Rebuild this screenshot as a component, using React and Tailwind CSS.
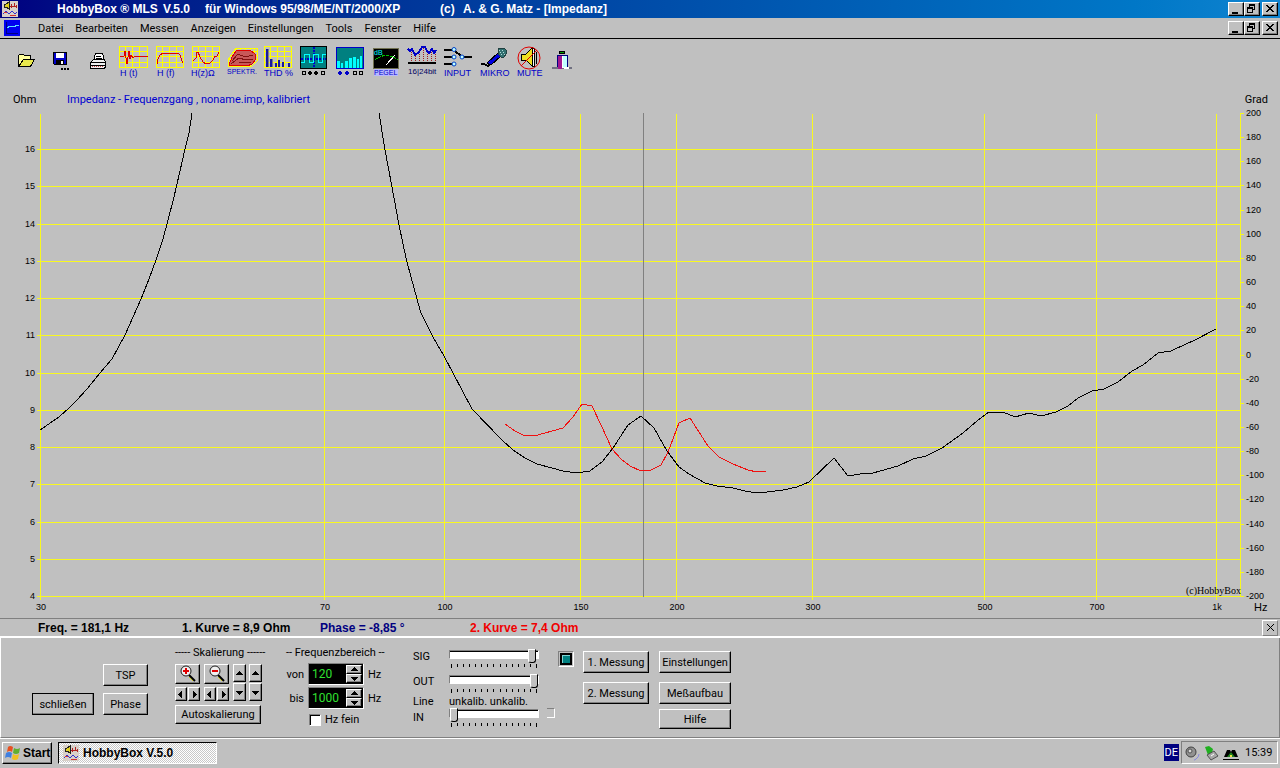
import React, { useState } from 'react';

const RAISED = 'border border-t-white border-l-white border-r-black border-b-black bg-[#c0c0c0] shadow-[inset_-1px_-1px_0_#808080]';

const MENU = ['Datei', 'Bearbeiten', 'Messen', 'Anzeigen', 'Einstellungen', 'Tools', 'Fenster', 'Hilfe'];

const FREQS = [
  { f: 30, label: '30' },
  { f: 70, label: '70' },
  { f: 100, label: '100' },
  { f: 150, label: '150' },
  { f: 200, label: '200' },
  { f: 300, label: '300' },
  { f: 500, label: '500' },
  { f: 700, label: '700' },
  { f: 1000, label: '1k' },
];
const OHMS = [4, 5, 6, 7, 8, 9, 10, 11, 12, 13, 14, 15, 16];
const DEGREES = Array.from({ length: 21 }, (_, i) => 200 - i * 20);

const xOf = (f) => Math.round(40 + (Math.log(f / 30) / Math.log(1000 / 30)) * 1176);
const yOfOhm = (o) => Math.round(596 - (o - 4) * 37.25);
const yOfDeg = (d) => Math.round(354.5 - d * 1.2075);

const CURVE_LOW = '40,430 59,417 69,408 77,400 87,389 100,373 112,359 125,335 141,299 149,279 156,260 163,239 167,224 174,197 177,184 185,149 189,133 192,113';
const CURVE_1 = '379,113 385,150 392,187 399,225 406,258 411,277 417,299 421,313 433,337 444,356 472,409 502,440 513,450 525,458 537,464 552,468 563,471 577,473 590,471 602,462 613,448 628,425 641,416 654,428 667,451 679,467 689,474 705,483 717,486 733,488 745,491 757,493 767,492 783,490 797,487 809,482 834,458 848,476 860,474 873,473 898,466 913,459 926,456 942,448 963,433 977,421 989,412 1003,412 1015,417 1029,413 1041,416 1056,412 1068,406 1078,398 1092,391 1104,389 1118,382 1132,371 1143,365 1158,353 1171,351 1186,344 1195,340 1216,329';
const CURVE_2 = '505,424 515,431 523,435 534,436 563,428 573,417 582,404 592,406 602,427 612,449 621,459 630,466 641,471 651,470 661,465 668,452 679,423 690,418 708,446 719,457 733,464 748,470 757,472 766,471';

const Caption = ({ size = 9, x = 2, y = 32, children, ...rest }) => (
  <text x={x} y={y} fontSize={size} fill="#0000c8" fontFamily="Liberation Sans, sans-serif" {...rest}>{children}</text>
);

const MiniGrid = ({ x, w = 28 }) => (
  <g stroke="#ffff00" fill="none">
    <rect x={x + 0.5} y="2.5" width={w} height="21" />
    <path d={`M${x + 6.5} 2v22M${x + 13.5} 2v22M${x + 20.5} 2v22M${x} 7.5h${w}M${x} 12.5h${w}M${x} 18.5h${w}`} />
  </g>
);

const TOOLS = [
  {
    name: 'Öffnen',
    art: (
      <>
        <path d="M10.5 22.5v-11l1-1h4l1 1h6v4h4l-4 7z" fill="#ffff9c" stroke="#000" />
        <path d="M10.5 22.5l5-7h11l-4 7z" fill="#e8e84c" stroke="#000" />
      </>
    ),
  },
  {
    name: 'Speichern',
    art: (
      <>
        <path d="M9.5 8.5h13v12h-12l-1-1z" fill="#0000c8" stroke="#000" />
        <path d="M12 9h8v5h-8z" fill="#fff" />
        <path d="M12 16h8v5h-8z" fill="#000" />
        <path d="M17 17h2v3h-2z" fill="#fff" />
        <path d="M17 24h2v2h-2zM20 24h2v2h-2zM23 24h2v2h-2z" fill="#000" />
      </>
    ),
  },
  {
    name: 'Drucken',
    art: (
      <>
        <path d="M13.5 16.5l2-7h7l2 7z" fill="#fff" stroke="#000" />
        <path d="M16 12.5h5M16 14.5h6" stroke="#000" />
        <path d="M10.5 18.5l3-3h10l2 2v5l-1 2h-14z" fill="#f0f0f0" stroke="#000" />
        <path d="M10 18.5h15M11 21.5h14" stroke="#000" />
        <path d="M12 22.5h12" stroke="#c04040" strokeDasharray="1 1" />
      </>
    ),
  },
  {
    name: 'Impulsantwort',
    art: (
      <>
        <MiniGrid x={3} />
        <path d="M4 12h4l1-5 2 13 2-13 1 8 1-4 2 3 2-2h13" fill="none" stroke="#e00000" />
        <Caption x={4}>H (t)</Caption>
      </>
    ),
  },
  {
    name: 'Frequenzgang',
    art: (
      <>
        <MiniGrid x={4} w={27} />
        <path d="M5 20l1-5 2-4 3-2h15l2 2 2 6v2" fill="none" stroke="#e00000" />
        <Caption x={5}>H (f)</Caption>
      </>
    ),
  },
  {
    name: 'Impedanz',
    art: (
      <>
        <MiniGrid x={4} w={27} />
        <path d="M5 17l3-3 1-6h1l2 5 3 5 3 2 4-1 3-3 2-4h2l2-4" fill="none" stroke="#e00000" />
        <Caption x={3}>H(z)Ω</Caption>
      </>
    ),
  },
  {
    name: 'Spektrum',
    art: (
      <>
        <path d="M4 22V16l8-12h21v13l-6 6z" fill="none" stroke="#ffff00" />
        <path d="M10 7h23M7 11h26M5 15h28M12 4v18M16 4v18M21 4v18M26 4v18M30 4v16" stroke="#ffff00" />
        <path d="M5 21l3-8 4-6 4-1 4 1 6-1 5 4 1 5-4 5-5 2z" fill="#c85858" stroke="#e00000" />
        <path d="M8 17l6-7 7 3 8-2M7 20l8-6 7 2 7-1M15 19l6-1 6 1" fill="none" stroke="#801010" />
        <Caption x={3} y={30} size={7}>SPEKTR.</Caption>
      </>
    ),
  },
  {
    name: 'Klirrfaktor',
    art: (
      <>
        <MiniGrid x={4} w={27} />
        <path d="M6 5h2v18H6zM10 15h2v8h-2zM15 19h2v4h-2zM18 16h2v7h-2zM22 18h2v5h-2zM28 19h2v4h-2z" fill="#1818a0" />
        <path d="M8 5h1v18H8zM12 15h1v8h-1z" fill="#808080" />
        <Caption x={4}>THD %</Caption>
      </>
    ),
  },
  {
    name: 'Oszilloskop',
    art: (
      <>
        <rect x="4.5" y="2.5" width="26" height="22" fill="#008080" stroke="#000" />
        <path d="M17.5 3v21M5 14.500h25" stroke="#0000c8" strokeWidth="2" strokeDasharray="2 1" />
        <path d="M5 18.5h3v-8h5v8h4v-8h5v8h4v-8h4" fill="none" stroke="#00ffff" />
        <path d="M6 27h4v4H6zM25 27h4v4h-4z" fill="#000" />
        <path d="M7 28h2v2H7zM26 28h2v2h-2z" fill="#c0c0c0" />
        <path d="M13 27h2v1h1v2h-1v1h-2v-1h-1v-2h1zM19 27h2v1h1v2h-1v1h-2v-1h-1v-2h1z" />
      </>
    ),
  },
  {
    name: 'Analysator',
    art: (
      <>
        <rect x="4.500" y="3.500" width="27" height="21" fill="#008080" stroke="#0000c8" />
        <path d="M5 17h3v7H5zM9 19h2v5H9zM13 17h3v7h-3zM17 14h3v10h-3zM21 13h3v11h-3zM25 15h2v9h-2zM28 12h2v12h-2z" fill="#00ffff" />
        <path d="M7 27h2v1h1v2H9v1H7v-1H6v-2h1zM14 27h2v1h1v2h-1v1h-2v-1h-1v-2h1z" fill="#0000c8" />
        <path d="M21.500 27.500h3v3h-3zM27.500 27.500h3v3h-3z" fill="none" stroke="#000" />
      </>
    ),
  },
  {
    name: 'Pegel',
    art: (
      <>
        <rect x="5.500" y="4.500" width="25" height="20" fill="#000" stroke="#707050" />
        <path d="M7 16q11-9 23 0" fill="none" stroke="#00c000" strokeDasharray="3 1" />
        <path d="M18 21l9-10" stroke="#fff" />
        <text x="6" y="11" fontSize="7" fill="#00ffff" fontFamily="Liberation Sans, sans-serif">dB</text>
        <rect x="6" y="25" width="24" height="7" fill="#b8b8ff" />
        <Caption x={6} y={31} size={7}>PEGEL</Caption>
      </>
    ),
  },
  {
    name: 'Auflösung',
    art: (
      <>
        <path d="M7.500 8v10M11.500 10v8M15.500 8v10M19.500 4v14M23.500 6v12M27.500 8v10M31.500 6v12" stroke="#a02020" strokeDasharray="1 1" />
        <path d="M4 5l2 2 2-2 3 6 4-3 3-5h3l2 4 2 2 3-4 2 4 2-3" fill="none" stroke="#0000c8" strokeWidth="2" />
        <path d="M4 18h28v2H4z" />
        <Caption x={4} y={30} size={8} fill="#000060">16|24bit</Caption>
      </>
    ),
  },
  {
    name: 'Eingang',
    art: (
      <>
        <path d="M4 6h9M4 13h9M4 20h9M15 7l6 5M22 13h10" stroke="#000" strokeWidth="2" />
        <g fill="#c0ffff" stroke="#0040c8" shapeRendering="auto">
          <circle cx="14" cy="5.500" r="2" />
          <circle cx="14" cy="13" r="2" />
          <circle cx="14" cy="20" r="2" />
          <circle cx="22" cy="13" r="2" />
        </g>
        <Caption x={4}>INPUT</Caption>
      </>
    ),
  },
  {
    name: 'Mikrofon',
    art: (
      <g>
        <path d="M5 20h3l4 2 4-3" fill="none" stroke="#000" strokeWidth="2" />
        <path d="M11 19l11-10 3 3-10 9z" fill="#0000e0" stroke="#000" />
        <path d="M22 5l2-1h4l2 2v4l-2 3h-3l-3-3z" fill="#307070" stroke="#204040" />
        <path d="M23 6h1M26 6h1M24 8h1M27 8h1M25 10h1M28 10h1" stroke="#b0d8d8" />
        <Caption x={4}>MIKRO</Caption>
      </g>
    ),
  },
  {
    name: 'Stumm',
    art: (
      <>
        <path d="M9 10h5l6-6v18l-6-6H9z" fill="#f0e020" stroke="#000" />
        <path d="M20 4h2v18h-2z" fill="#f8f8f8" stroke="#000" />
        <path d="M24 8v12" stroke="#000" />
        <circle cx="17" cy="14" r="11" fill="none" stroke="#e00000" shapeRendering="auto" />
        <path d="M25 6L9 22" stroke="#e00000" shapeRendering="auto" />
        <Caption x={5}>MUTE</Caption>
      </>
    ),
  },
  {
    name: 'Beenden',
    art: (
      <>
        <path d="M4 23h20v2H4z" fill="#707080" />
        <path d="M9 11h11v12H9z" fill="#000080" />
        <path d="M10 12h4v13h-4z" fill="#a01890" />
        <path d="M14 12h5v12h-5z" fill="#c0ffff" />
        <path d="M14 12h1v12h-1z" fill="#fff" />
        <path d="M15 23h6v2h-5z" fill="#fff" />
        <path d="M11.500 7.500h5v2h-5z" fill="#00a000" stroke="#000" />
      </>
    ),
  },
];

const AppIcon = () => (
  <svg width="16" height="16" viewBox="0 0 16 16" shapeRendering="crispEdges" aria-hidden="true">
    <rect width="16" height="16" fill="#d8d0c8" />
    <path d="M2 3h2l3-2v7L4 6H2z" fill="#e0d020" stroke="#202020" />
    <path d="M9 3h1v4H9zM12 2h1v4h-1zM14 4h1v3h-1zM8 5h7v1H8z" fill="#b02020" />
    <path d="M1 13l3-3 3 3 3-3 3 3 2-2" fill="none" stroke="#3030d0" />
    <path d="M2 11h3M8 14h6" stroke="#d03030" />
  </svg>
);

const WindowButtons = () => (
  <div className="flex">
    <button aria-label="Minimieren" className={`h-[14px] w-4 ${RAISED}`}>
      <svg viewBox="0 0 14 12" className="block h-3 w-[14px]" shapeRendering="crispEdges"><path d="M3 9h6v2H3z" /></svg>
    </button>
    <button aria-label="Wiederherstellen" className={`h-[14px] w-4 ${RAISED}`}>
      <svg viewBox="0 0 14 12" className="block h-3 w-[14px]" shapeRendering="crispEdges">
        <path d="M4 1h6v6H8V6h1V3H5v1H4zM2 4h6v6H2zM3 6v3h4V6z" fillRule="evenodd" />
      </svg>
    </button>
    <button aria-label="Schließen" className={`ml-0.5 h-[14px] w-4 ${RAISED}`}>
      <svg viewBox="0 0 14 12" className="block h-3 w-[14px]" shapeRendering="crispEdges">
        <path d="M3 2h2v1h1v1h2V3h1V2h2v1h-1v1H9v1H8v1h1v1h1v1h1v1H9V8H8V7H6v1H5v1H3V8h1V7h1V6h1V5H5V4H4V3H3z" />
      </svg>
    </button>
  </div>
);

const Button = ({ className = '', children, ...rest }) => (
  <button className={`flex items-center justify-center whitespace-nowrap ${RAISED} ${className}`} {...rest}>{children}</button>
);

const ARROWS = {
  left: 'M5 1v7h-1V7H3V6H2V5H1V4h1V3h1V2h1V1z',
  right: 'M3 1v7h1V7h1V6h1V5h1V4H6V3H5V2H4V1z',
  up: 'M1 6h7V5H7V4H6V3H5V2H4v1H3v1H2v1H1z',
  down: 'M1 3h7v1H7v1H6v1H5v1H4V6H3V5H2V4H1z',
};

const ArrowButton = ({ dir, label, className }) => (
  <Button aria-label={label} className={className}>
    <svg width="9" height="9" viewBox="0 0 9 9" shapeRendering="crispEdges" className="shrink-0"><path d={ARROWS[dir]} /></svg>
  </Button>
);

const Magnifier = ({ plus }) => (
  <svg width="18" height="18" viewBox="0 0 18 18">
    <path d="M10 10l6 6" stroke="#000" strokeWidth="2" />
    <path d="M10 12l4 4" stroke="#c8c820" />
    <circle cx="7" cy="6" r="5" fill="#f0f0f0" stroke="#202020" />
    <path d={plus ? 'M4 6h6M7 3v6' : 'M4 6h6'} stroke="#e00000" strokeWidth="2" />
  </svg>
);

const FreqField = ({ id, label, value, onChange }) => {
  const step = (n) => onChange(String(Number(value) + n));
  return (
    <div className="flex items-center">
      <label htmlFor={id} className="w-[22px] pr-1 text-right">{label}</label>
      <div className="flex h-[22px] w-14 border border-t-[#808080] border-l-[#808080] border-r-white border-b-white bg-black p-px">
        <input
          id={id}
          value={value}
          onChange={e => onChange(e.target.value)}
          className="w-9 min-w-0 bg-black pl-0.5 text-xs text-[#30e030] outline-none"
        />
        <div className="flex w-4 flex-col">
          <button aria-label={`${label} erhöhen`} onClick={() => step(1)} className={`flex h-[9px] w-4 items-center justify-center ${RAISED}`}>
            <svg width="9" height="7" viewBox="0 1 9 7" shapeRendering="crispEdges" className="shrink-0"><path d={ARROWS.up} /></svg>
          </button>
          <button aria-label={`${label} verringern`} onClick={() => step(-1)} className={`flex h-[9px] w-4 items-center justify-center ${RAISED}`}>
            <svg width="9" height="7" viewBox="0 1 9 7" shapeRendering="crispEdges" className="shrink-0"><path d={ARROWS.down} /></svg>
          </button>
        </div>
      </div>
      <span className="pl-1">Hz</span>
    </div>
  );
};

const Slider = ({ label, start }) => (
  <div className="w-[90px]">
    <input
      type="range"
      aria-label={label}
      defaultValue={start}
      className="block h-[14px] w-full appearance-none bg-transparent [&::-webkit-slider-runnable-track]:h-[9px] [&::-webkit-slider-runnable-track]:border [&::-webkit-slider-runnable-track]:border-[#808080] [&::-webkit-slider-runnable-track]:border-r-white [&::-webkit-slider-runnable-track]:border-b-white [&::-webkit-slider-runnable-track]:bg-white [&::-webkit-slider-runnable-track]:shadow-[inset_0_1px_0_#000] [&::-webkit-slider-thumb]:-mt-0.5 [&::-webkit-slider-thumb]:h-[14px] [&::-webkit-slider-thumb]:w-2 [&::-webkit-slider-thumb]:appearance-none [&::-webkit-slider-thumb]:rounded-b-[3px] [&::-webkit-slider-thumb]:border [&::-webkit-slider-thumb]:border-t-white [&::-webkit-slider-thumb]:border-l-white [&::-webkit-slider-thumb]:border-r-black [&::-webkit-slider-thumb]:border-b-black [&::-webkit-slider-thumb]:bg-[#c0c0c0]"
    />
    <div className="mt-[3px] flex justify-between px-0.5">
      {Array.from({ length: 15 }, (_, i) => (
        <span key={i} className={`w-px bg-black ${i === 0 || i === 14 ? 'h-1' : 'h-[3px]'}`} />
      ))}
    </div>
  </div>
);

const ImpedanceChart = () => (
  <svg viewBox="0 108 1280 510" className="block w-full" fontFamily="Liberation Sans, sans-serif" fontSize="9" role="img" aria-label="Impedanz - Frequenzgang">
    <g stroke="#f8f820" shapeRendering="crispEdges">
      {OHMS.map(o => <line key={o} x1="37" x2="1241" y1={yOfOhm(o) + 0.5} y2={yOfOhm(o) + 0.5} />)}
      {FREQS.map(({ f }) => <line key={f} x1={xOf(f) + 0.5} x2={xOf(f) + 0.5} y1="114" y2="600" />)}
      <line x1="1240.5" x2="1240.5" y1="113" y2="597" />
      {DEGREES.map(d => <line key={d} x1="1240" x2="1244" y1={yOfDeg(d) + 0.5} y2={yOfDeg(d) + 0.5} />)}
    </g>

    {/* cursor */}
    <line x1="643.5" x2="643.5" y1="113" y2="597" stroke="#808080" shapeRendering="crispEdges" />

    <g fill="none" shapeRendering="crispEdges">
      <polyline points={CURVE_LOW} stroke="#000" />
      <polyline points={CURVE_1} stroke="#000" />
      <polyline points={CURVE_2} stroke="#f01010" />
    </g>

    <g textAnchor="end">
      {OHMS.map(o => <text key={o} x="35" y={yOfOhm(o) + 3}>{o}</text>)}
    </g>
    <g textAnchor="middle">
      {FREQS.map(({ f, label }) => <text key={f} x={xOf(f) + 1} y="610">{label}</text>)}
    </g>
    {DEGREES.map(d => <text key={d} x="1246" y={yOfDeg(d) + 3}>{d}</text>)}
    <text x="1254" y="611" fontSize="11">Hz</text>
    <text x="1186" y="594" fontSize="10" fontFamily="Liberation Serif, serif">(c)HobbyBox</text>
  </svg>
);

const ControlPanel = () => {
  const [from, setFrom] = useState('120');
  const [to, setTo] = useState('1000');

  return (
    <div className="flex items-start border-l border-r border-l-white border-r-[#808080] border-b border-b-[#808080] pt-[7px] pb-2 pl-[31px]">
      <div className="mt-[19px] flex items-end gap-[9px]">
        <Button className="h-[22px] w-[62px] outline outline-black -outline-offset-1">schließen</Button>
        <div className="flex flex-col gap-[7px]">
          <Button className="h-[22px] w-[45px]">TSP</Button>
          <Button className="h-[22px] w-[45px]">Phase</Button>
        </div>
      </div>

      {/* Skalierung */}
      <div className="ml-[27px] w-[88px]">
        <div className="mb-[3px] h-4 leading-4 whitespace-nowrap">----- Skalierung ------</div>
        <div className="flex gap-[3px]">
          {[true, false].map(plus => (
            <div key={String(plus)} className="mr-px flex w-[25px] flex-col gap-[3px]">
              <Button aria-label={plus ? 'Vergrößern' : 'Verkleinern'} className="h-5 w-[25px]"><Magnifier plus={plus} /></Button>
              <div className="flex justify-between">
                <ArrowButton dir="left" label="nach links" className="h-[14px] w-3" />
                <ArrowButton dir="right" label="nach rechts" className="h-[14px] w-3" />
              </div>
            </div>
          ))}
          {[1, 2].map(n => (
            <div key={n} className="flex flex-col gap-px">
              <ArrowButton dir="up" label="nach oben" className="h-[18px] w-[13px]" />
              <ArrowButton dir="down" label="nach unten" className="h-[18px] w-[13px]" />
            </div>
          ))}
        </div>
        <Button className="mt-1 h-[19px] w-[86px]">Autoskalierung</Button>
      </div>

      {/* Frequenzbereich */}
      <div className="ml-[23px] w-[98px]">
        <div className="mb-0.5 h-4 leading-4 whitespace-nowrap">-- Frequenzbereich --</div>
        <div className="flex flex-col gap-0.5">
          <FreqField id="von" label="von" value={from} onChange={setFrom} />
          <FreqField id="bis" label="bis" value={to} onChange={setTo} />
        </div>
        <label className="mt-[3px] flex items-center gap-1 pl-[23px] leading-4">
          <input type="checkbox" className="size-3 appearance-none border border-t-[#808080] border-l-[#808080] border-r-white border-b-white bg-white shadow-[inset_1px_1px_0_#000]" />
          Hz fein
        </label>
      </div>

      {/* Pegelregler */}
      <div className="ml-[29px] flex flex-col pt-0.5 leading-4">
        <div className="flex h-[25px]">
          <span className="w-9 pt-0.5">SIG</span>
          <Slider label="SIG" start={97} />
        </div>
        <div className="flex h-[22px]">
          <span className="w-9 pt-0.5">OUT</span>
          <Slider label="OUT" start={100} />
        </div>
        <div className="flex h-3">
          <span className="w-9">Line</span>
          <span>unkalib. unkalib.</span>
        </div>
        <div className="flex">
          <span className="w-9 pt-1">IN</span>
          <Slider label="IN" start={0} />
          <span className="mt-0.5 ml-2 h-[10px] w-2 border border-l-0 border-t-[#808080] border-r-white border-b-white" />
        </div>
      </div>

      <div className="mt-1.5 ml-[3px] flex size-4 items-center justify-center border border-t-[#808080] border-l-[#808080] border-r-white border-b-white">
        <span className="size-3 border-2 border-black bg-[#008080] shadow-[inset_1px_1px_0_#80d0d0]" />
      </div>

      <div className="mt-1.5 ml-[9px] flex flex-col gap-[9px]">
        <Button className="h-[22px] w-[66px]">1. Messung</Button>
        <Button className="h-[22px] w-[66px]">2. Messung</Button>
      </div>
      <div className="mt-1.5 ml-[10px] flex flex-col">
        <Button className="h-[22px] w-[72px]">Einstellungen</Button>
        <Button className="mt-[9px] h-[22px] w-[72px]">Meßaufbau</Button>
        <Button className="mt-[5px] h-5 w-[72px]">Hilfe</Button>
      </div>
    </div>
  );
};

const Taskbar = () => (
  <div className="flex h-7 items-center border-t border-t-white px-0.5">
    <button className={`flex h-[22px] w-[50px] items-center gap-0.5 pl-0.5 text-xs font-bold font-['Liberation_Sans',sans-serif] ${RAISED}`}>
      <svg width="16" height="16" viewBox="0 0 16 16" className="shrink-0" aria-hidden="true">
        <path d="M3 2q2-2 5 0L7 7Q5 5 2 7z" fill="#e85020" />
        <path d="M9 3q3 2 6 0l-1 5q-3 2-6 0z" fill="#60b030" />
        <path d="M1 8q3-2 6 0l-1 5Q3 11 0 13z" fill="#4080e0" />
        <path d="M8 9q3 2 6 0l-1 5q-3 2-6 0z" fill="#f0c020" />
      </svg>
      Start
    </button>
    <button className="ml-1.5 flex h-[22px] w-[159px] items-center gap-1 border border-t-black border-l-black border-r-white border-b-white bg-[repeating-conic-gradient(#ffffff_0%_25%,#c8c8c8_0%_50%)] bg-[length:2px_2px] pl-1 text-xs font-bold font-['Liberation_Sans',sans-serif]">
      <AppIcon />
      HobbyBox V.5.0
    </button>
    <div className="mr-0.5 ml-auto flex h-[17px] items-center bg-[#000080] px-px text-white">DE</div>
    <div className="flex h-[23px] w-[97px] items-center gap-1 border border-t-[#808080] border-l-[#808080] border-r-white border-b-white pl-0.5">
      <svg width="16" height="16" viewBox="0 0 16 16" aria-hidden="true">
        <circle cx="7" cy="7" r="5" fill="#909090" stroke="#404040" />
        <circle cx="6" cy="6" r="2" fill="#d8d8d8" stroke="#505050" />
        <path d="M12 14q3-2 3-5M10 15q1 0 2-1" fill="none" stroke="#8888e0" />
      </svg>
      <svg width="15" height="16" viewBox="0 0 15 16" aria-hidden="true">
        <path d="M1 2l4-1 4 3-1 4-4 2z" fill="#20b020" />
        <path d="M3 10l7-4 4 5-7 4z" fill="#a8a8a8" stroke="#505050" />
        <path d="M7 11l3-2" stroke="#fff" />
      </svg>
      <svg width="16" height="16" viewBox="0 0 16 16" aria-hidden="true">
        <path d="M1 12l3-7h3l1 2 1-2h3l3 7z" />
        <path d="M0 14h16v1H0z" />
        <path d="M4 12l4-5 4 5z" fill="#208020" />
        <path d="M7 10h2v2H7z" fill="#e8e840" />
      </svg>
      <span className="ml-0.5">15:39</span>
    </div>
  </div>
);

const App = () => (
  <div className="flex min-h-screen flex-col bg-[#c0c0c0] text-[11px] leading-none text-black font-['Roboto','Liberation_Sans',sans-serif]">
    {/* Title bar */}
    <div className="flex h-[18px] items-center bg-gradient-to-r from-[#000080] to-[#1084d0] px-0.5 text-xs font-bold text-white font-['Liberation_Sans',sans-serif]">
      <AppIcon />
      <div className="ml-[39px] flex flex-1 whitespace-nowrap">
        <span className="w-[106px]">HobbyBox ® MLS</span>
        <span className="w-[42px]">V.5.0</span>
        <span className="w-[235px]">für Windows 95/98/ME/NT/2000/XP</span>
        <span className="w-[23px]">(c)</span>
        <span>A. &amp; G. Matz - [Impedanz]</span>
      </div>
      <WindowButtons />
    </div>

    {/* Menu */}
    <div className="flex h-[21px] items-center border-b border-black px-0.5">
      <svg width="16" height="16" viewBox="0 0 16 16" className="ml-0.5" shapeRendering="crispEdges" aria-hidden="true">
        <rect width="16" height="16" fill="#0000f0" />
        <path d="M2.5 2v11.500H14" fill="none" stroke="#000080" />
        <path d="M3 8l3-2h2l2 1 3-2h2" fill="none" stroke="#60e0ff" />
      </svg>
      <nav className="ml-[18px] flex flex-1 gap-3">
        {MENU.map(m => <button key={m}>{m}</button>)}
      </nav>
      <WindowButtons />
    </div>

    {/* Toolbar */}
    <div className="flex h-[47px] items-start px-2 pt-[5px]">
      {TOOLS.map(({ name, art }) => (
        <button key={name} aria-label={name} className="size-9">
          <svg viewBox="0 0 36 36" className="block size-9" shapeRendering="crispEdges">{art}</svg>
        </button>
      ))}
    </div>

    {/* Chart heading */}
    <div className="flex h-[22px] items-center pt-1 pr-3 pl-[13px]">
      <span className="w-[54px]">Ohm</span>
      <span className="flex-1 text-[#0000d0]">Impedanz - Frequenzgang , noname.imp, kalibriert</span>
      <span>Grad</span>
    </div>
    <ImpedanceChart />

    {/* Readout */}
    <div className="flex h-5 items-center border-t border-b-2 border-t-[#808080] border-b-white pr-0.5 pl-[38px] text-xs font-bold whitespace-nowrap font-['Liberation_Sans',sans-serif]">
      <span className="w-36">Freq. = 181,1 Hz</span>
      <span className="w-[138px]">1. Kurve = 8,9 Ohm</span>
      <span className="w-[150px] text-[#000080]">Phase = -8,85 °</span>
      <span className="flex-1 text-[#f00000]">2. Kurve = 7,4 Ohm</span>
      <button aria-label="Anzeige schließen" className="flex size-4 items-center justify-center border border-t-white border-l-white border-r-[#808080] border-b-[#808080]">
        <svg width="9" height="9" viewBox="0 0 9 9"><path d="M1 1l7 7M8 1l-7 7" stroke="#000" /></svg>
      </button>
    </div>

    <ControlPanel />
    <Taskbar />
  </div>
);

export default App;
